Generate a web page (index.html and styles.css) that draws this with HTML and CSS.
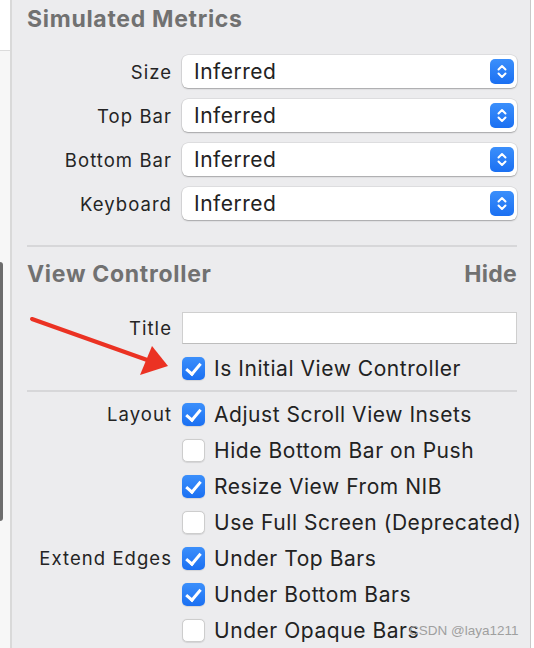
FILE: index.html
```html
<!DOCTYPE html>
<html>
<head>
<meta charset="utf-8">
<link rel="stylesheet" href="styles.css">
</head>
<body>
<div class="page">
  <div class="gutter">
    <div class="gutter-top"></div>
    <div class="scroll-thumb"></div>
  </div>
  <div class="panel">
    <h2 class="section-title">Simulated Metrics</h2>
    <div class="form popups">
      <div class="label">Size</div>
      <div class="popup"><span>Inferred</span><span class="stepper"><svg width="24" height="25" viewBox="0 0 24 25"><path d="M8.5 10.5 L12 7 L15.5 10.5 M8.5 14.5 L12 18 L15.5 14.5" fill="none" stroke="#fff" stroke-width="2" stroke-linecap="round" stroke-linejoin="round"/></svg></span></div>
      <div class="label">Top Bar</div>
      <div class="popup"><span>Inferred</span><span class="stepper"><svg width="24" height="25" viewBox="0 0 24 25"><path d="M8.5 10.5 L12 7 L15.5 10.5 M8.5 14.5 L12 18 L15.5 14.5" fill="none" stroke="#fff" stroke-width="2" stroke-linecap="round" stroke-linejoin="round"/></svg></span></div>
      <div class="label">Bottom Bar</div>
      <div class="popup"><span>Inferred</span><span class="stepper"><svg width="24" height="25" viewBox="0 0 24 25"><path d="M8.5 10.5 L12 7 L15.5 10.5 M8.5 14.5 L12 18 L15.5 14.5" fill="none" stroke="#fff" stroke-width="2" stroke-linecap="round" stroke-linejoin="round"/></svg></span></div>
      <div class="label">Keyboard</div>
      <div class="popup"><span>Inferred</span><span class="stepper"><svg width="24" height="25" viewBox="0 0 24 25"><path d="M8.5 10.5 L12 7 L15.5 10.5 M8.5 14.5 L12 18 L15.5 14.5" fill="none" stroke="#fff" stroke-width="2" stroke-linecap="round" stroke-linejoin="round"/></svg></span></div>
    </div>
    <hr class="sep sep-a">
    <div class="section-head">
      <h2 class="section-title">View Controller</h2>
      <span class="hide">Hide</span>
    </div>
    <div class="form title-form">
      <div class="label">Title</div>
      <div class="field"></div>
      <div></div>
      <label class="check"><span class="box on"></span>Is Initial View Controller</label>
    </div>
    <hr class="sep sep-b">
    <div class="form checks">
      <div class="label">Layout</div>
      <label class="check"><span class="box on"></span>Adjust Scroll View Insets</label>
      <div></div>
      <label class="check"><span class="box"></span>Hide Bottom Bar on Push</label>
      <div></div>
      <label class="check"><span class="box on"></span>Resize View From NIB</label>
      <div></div>
      <label class="check"><span class="box"></span>Use Full Screen (Deprecated)</label>
      <div class="label">Extend Edges</div>
      <label class="check"><span class="box on"></span>Under Top Bars</label>
      <div></div>
      <label class="check"><span class="box on"></span>Under Bottom Bars</label>
      <div></div>
      <label class="check"><span class="box"></span>Under Opaque Bars</label>
    </div>
  </div>
  <div class="edge"></div>
  <svg class="arrow" width="534" height="648" viewBox="0 0 534 648">
    <line x1="32" y1="319" x2="150" y2="361" stroke="#eb3223" stroke-width="4" stroke-linecap="round"/>
    <polygon points="168,366 140,375 152,346" fill="#eb3223"/>
  </svg>
  <div class="watermark">CSDN @laya1211</div>
</div>
</body>
</html>
```
FILE: styles.css
```css
html, body {
  margin: 0;
  padding: 0;
  background: #ffffff;
}
.page {
  position: relative;
  width: 534px;
  height: 648px;
  display: flex;
  overflow: hidden;
  font-family: Inter, "Open Sans", sans-serif;
  color: #262626;
}
.gutter {
  width: 10px;
  flex: none;
  background: #f7f7f7;
  border-right: 2px solid #d9d9d9;
  display: flex;
  flex-direction: column;
}
.gutter-top {
  height: 50px;
  background: #ffffff;
  border-bottom: 1px solid #dcdcdc;
}
.scroll-thumb {
  margin-top: 211px;
  width: 3px;
  height: 259px;
  background: #6d6d6d;
  border-radius: 0 3px 3px 0;
}
.panel {
  flex: 1;
  min-width: 0;
  background: #ececee;
  padding: 0 13px 0 15px;
}
.edge {
  width: 1px;
  flex: none;
  background: #c9c9c9;
  margin-right: 3px;
}
.section-title {
  margin: 0;
  font-size: 23px;
  font-weight: 700;
  color: #717171;
  line-height: 28px;
  letter-spacing: 0.7px;
}
.panel > .section-title {
  padding-top: 5px;
}
.form {
  display: grid;
  grid-template-columns: 144px minmax(0, 1fr);
  column-gap: 11px;
  align-items: center;
}
.popups {
  margin-top: 22px;
  row-gap: 11px;
}
.label {
  text-align: right;
  font-size: 18.5px;
  letter-spacing: 1.05px;
  margin-right: -1px;
  color: #242424;
  white-space: nowrap;
}
.popup {
  height: 33px;
  box-sizing: border-box;
  background: #ffffff;
  border-radius: 6px;
  box-shadow: 0 0 0 0.5px rgba(0,0,0,0.12), 0 1px 1.5px rgba(0,0,0,0.25);
  display: flex;
  align-items: center;
  justify-content: space-between;
  padding: 0 3px 0 12px;
  font-size: 21px;
  letter-spacing: 0.5px;
  color: #222;
}
.stepper {
  width: 24px;
  height: 25px;
  border-radius: 5px;
  background: linear-gradient(#3b8ffb, #1b70f2);
  display: flex;
}
.sep {
  border: 0;
  height: 2px;
  background: #d7d7d9;
  margin: 0;
}
.sep-a {
  margin-top: 25px;
}
.section-head {
  display: flex;
  justify-content: space-between;
  align-items: center;
  margin-top: 13px;
}
.hide {
  font-size: 23px;
  line-height: 28px;
  font-weight: 700;
  color: #717171;
  letter-spacing: 0.3px;
}
.title-form {
  margin-top: 24px;
  row-gap: 12px;
}
.field {
  height: 32px;
  box-sizing: border-box;
  background: #ffffff;
  border: 1px solid #cfcfcf;
  border-bottom-color: #bdbdbd;
}
.check {
  display: flex;
  align-items: center;
  gap: 9px;
  font-size: 21px;
  letter-spacing: 0.55px;
  color: #222;
  height: 24px;
  white-space: nowrap;
}
.box {
  width: 23px;
  height: 23px;
  box-sizing: border-box;
  flex: none;
  border-radius: 5px;
  background: #ffffff;
  border: 1px solid #cdcdcd;
  box-shadow: 0 0.5px 1px rgba(0,0,0,0.1);
  position: relative;
}
.box.on {
  background: linear-gradient(#3b8ffb, #1b70f2);
  border: none;
}
.box.on::after {
  content: "";
  position: absolute;
  left: 7px;
  top: 3px;
  width: 6px;
  height: 12px;
  border: solid #fff;
  border-width: 0 3px 3px 0;
  transform: rotate(40deg);
}
.sep-b {
  margin-top: 10px;
}
.checks {
  margin-top: 10px;
  row-gap: 12px;
}
.arrow {
  position: absolute;
  left: 0;
  top: 0;
  pointer-events: none;
}
.watermark {
  position: absolute;
  left: 409px;
  top: 623px;
  font-family: "Liberation Sans", Arial, sans-serif;
  font-size: 13.5px;
  color: #9f9f9f;
}
```
